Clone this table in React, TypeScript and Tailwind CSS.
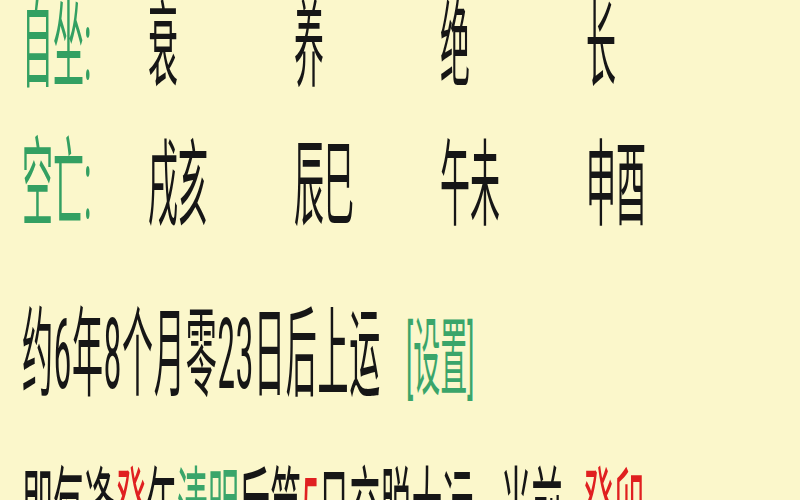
const cols = [
  { label: '自坐:', values: ['衰', '养', '绝', '长'] },
  { label: '空亡:', values: ['戌亥', '辰巳', '午未', '申酉'] }
];

export default function App() {
  return (
    <div className="h-[500px] w-[800px] overflow-hidden bg-[#fbf7cb]">
      <div className="origin-top-left scale-y-[3.15] pl-[22px] font-['Roboto','Noto_Sans_CJK_SC',sans-serif] text-[31px] leading-[31px] text-[#161616]">
        <div className="mt-[-3.5px] flex flex-col gap-[13px]">
          {cols.map((row) => (
            <div key={row.label} className="flex">
              <div className="w-[126px] whitespace-nowrap text-[#33a062]">{row.label}</div>
              {row.values.map((v) => (
                <div key={v} className="w-[146px] whitespace-nowrap text-[30px]">
                  {v}
                </div>
              ))}
            </div>
          ))}
        </div>

        <div className="mt-[23px] flex items-baseline whitespace-nowrap">
          <span className="tracking-[0.8px]">约6年8个月零23日后上运</span>
          <span className="ml-[25px] text-[27px] text-[#3aa56a]">[设置]</span>
        </div>

        <div className="mt-[18px] flex items-baseline whitespace-nowrap">
          <span>即每逢</span>
          <span className="text-[#e02020]">癸</span>
          <span>年</span>
          <span className="text-[#3aa56a]">清明</span>
          <span>后第</span>
          <span className="text-[#e02020]">5</span>
          <span>日交脱大运</span>
          <span className="ml-[27px]">当前</span>
          <span className="ml-[20px] text-[#e02020]">癸卯</span>
        </div>
      </div>
    </div>
  );
}
